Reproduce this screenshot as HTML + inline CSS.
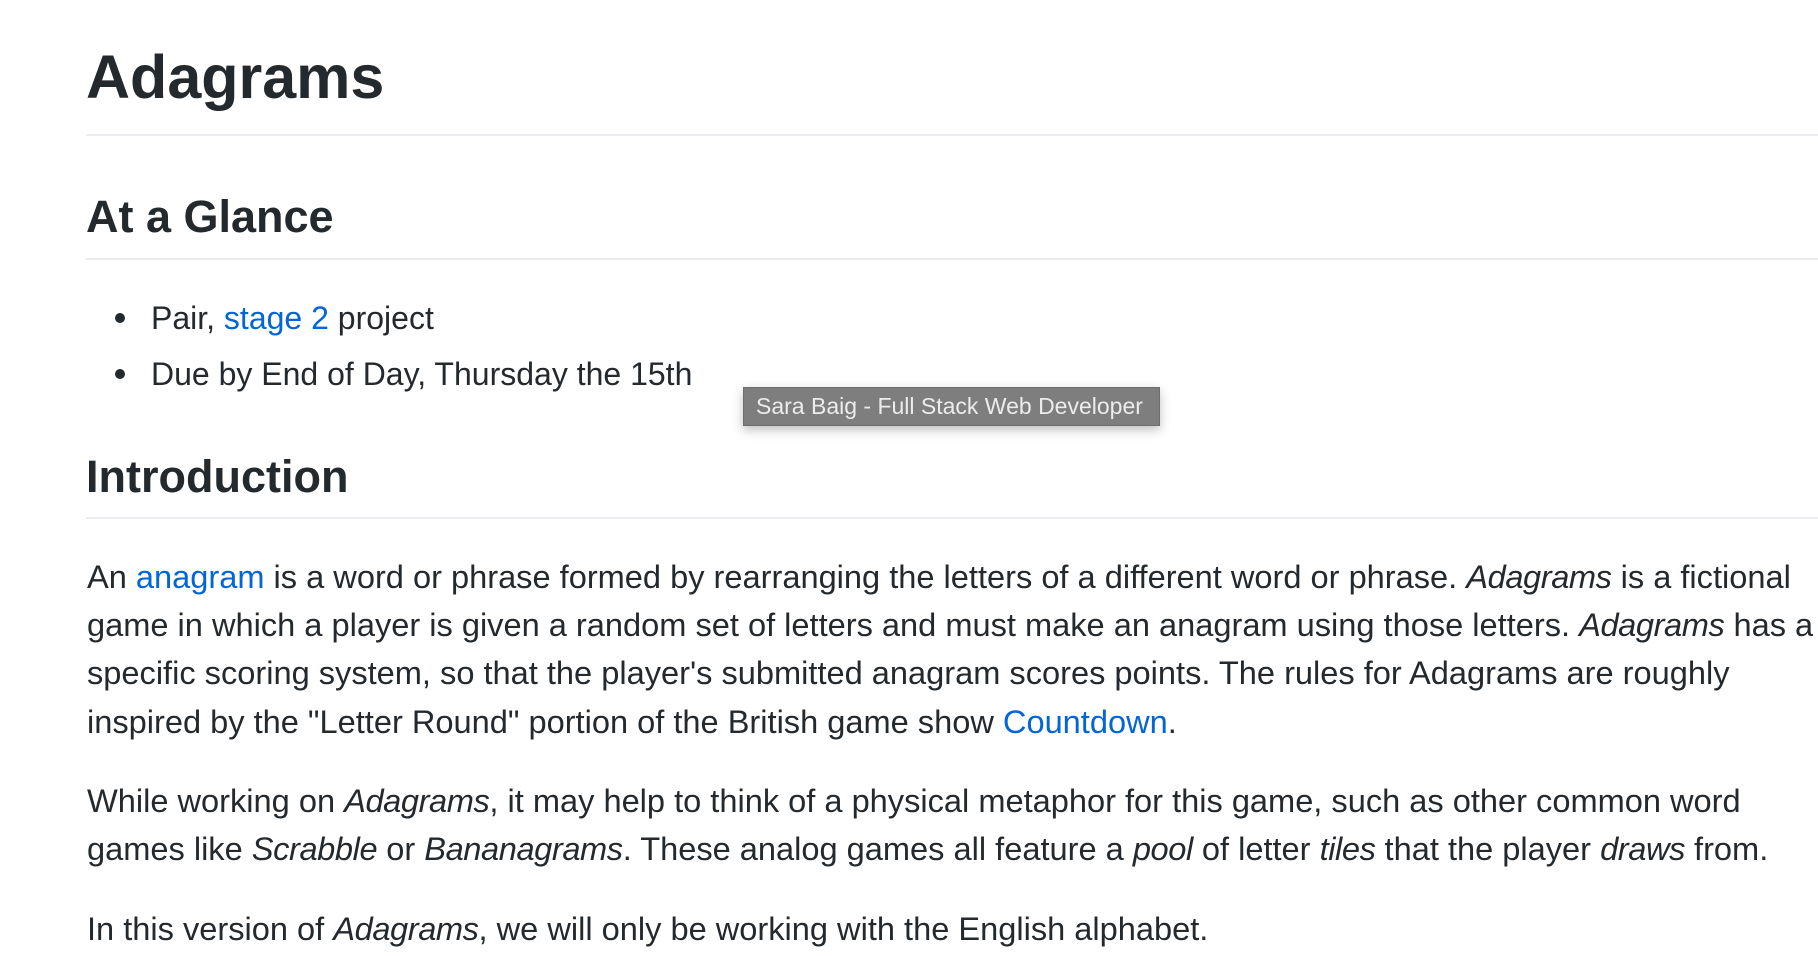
<!DOCTYPE html>
<html><head><meta charset="utf-8"><style>
html,body{margin:0;padding:0;background:#fff;width:1818px;height:976px;overflow:hidden;position:relative}
body{font-family:"Liberation Sans",Arial,sans-serif;color:#24292e}
.l{position:absolute;left:87px;white-space:nowrap;font-size:32.6px;line-height:48px}
.l i{letter-spacing:-0.4px}
.h1{position:absolute;left:86px;font-size:61px;line-height:72px;font-weight:bold;white-space:nowrap}
.h2{position:absolute;left:86px;font-size:45px;line-height:54px;font-weight:bold;white-space:nowrap}
.rule{position:absolute;left:86px;right:0;height:2px;background:#eaecef}
a{color:#0366d6;text-decoration:none}
.dot{position:absolute;left:115px;width:10px;height:10px;border-radius:50%;background:#24292e}
.tip{position:absolute;left:743px;top:387px;width:417px;height:39px;background:#7e7e7e;border:1px solid #6e6e6e;box-shadow:0 4px 10px rgba(0,0,0,.25);color:#ececec;font-size:23px;line-height:37px;white-space:nowrap;box-sizing:border-box;padding-left:12px}
</style></head><body>
<div class="h1" style="top:41px">Adagrams</div>
<div class="rule" style="top:134px"></div>
<div class="h2" style="top:190px">At a Glance</div>
<div class="rule" style="top:258px"></div>
<div class="dot" style="top:313px"></div>
<div class="l" style="left:151px;top:294px;font-size:32px">Pair, <a>stage 2</a> project</div>
<div class="dot" style="top:369px"></div>
<div class="l" style="left:151px;top:350px;font-size:32px">Due by End of Day, Thursday the 15th</div>
<div class="h2" style="top:450px">Introduction</div>
<div class="rule" style="top:517px"></div>
<div class="l" style="top:553px">An <a>anagram</a> is a word or phrase formed by rearranging the letters of a different word or phrase. <i>Adagrams</i> is a fictional</div>
<div class="l" style="top:601px">game in which a player is given a random set of letters and must make an anagram using those letters. <i>Adagrams</i> has a</div>
<div class="l" style="top:649px">specific scoring system, so that the player's submitted anagram scores points. The rules for Adagrams are roughly</div>
<div class="l" style="top:698px">inspired by the "Letter Round" portion of the British game show <a>Countdown</a>.</div>
<div class="l" style="top:777px">While working on <i>Adagrams</i>, it may help to think of a physical metaphor for this game, such as other common word</div>
<div class="l" style="top:825px">games like <i>Scrabble</i> or <i>Bananagrams</i>. These analog games all feature a <i>pool</i> of letter <i>tiles</i> that the player <i>draws</i> from.</div>
<div class="l" style="top:905px">In this version of <i>Adagrams</i>, we will only be working with the English alphabet.</div>
<div class="tip">Sara Baig - Full Stack Web Developer</div>
</body></html>
